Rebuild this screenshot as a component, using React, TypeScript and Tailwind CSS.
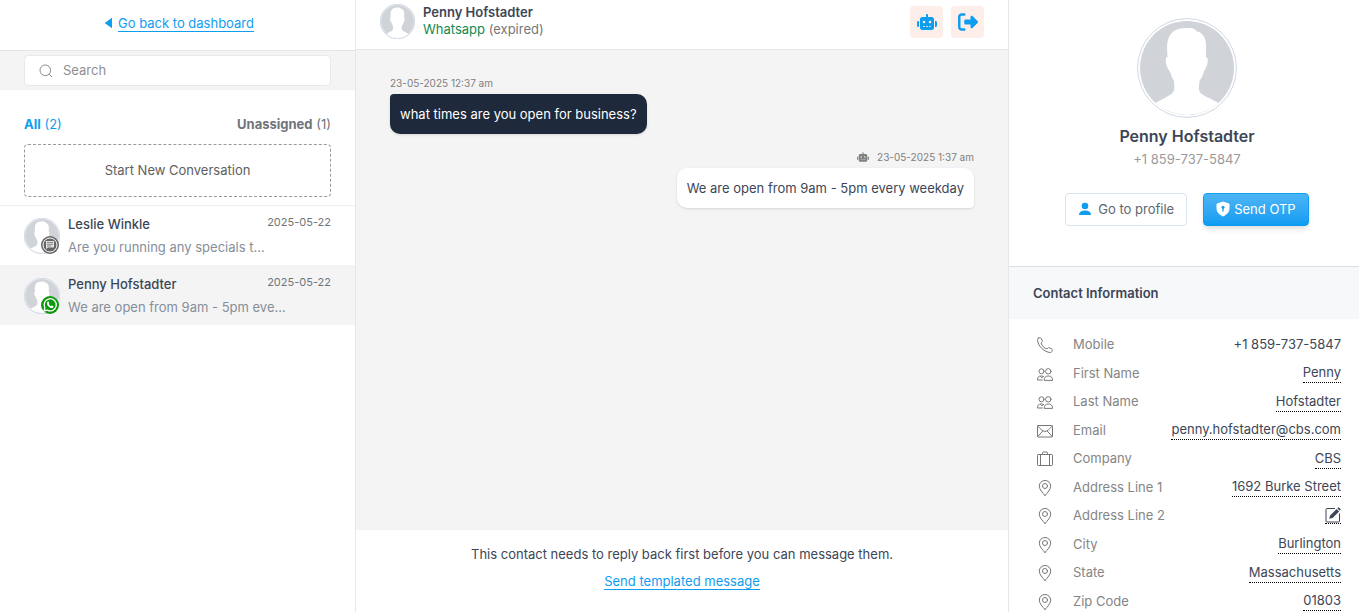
import type { ReactNode } from "react";
import { FaRobot, FaRightFromBracket } from "react-icons/fa6";

type IconProps = { className?: string };

function Avatar({ className = "" }: IconProps) {
  return (
    <svg viewBox="0 0 100 100" className={className} aria-hidden="true">
      <circle cx="50" cy="50" r="49.4" fill="#fff" stroke="#cfd8e4" strokeWidth="1" vectorEffect="non-scaling-stroke" />
      <circle cx="50" cy="50" r="47" fill="#d0d4d9" />
      <path
        fill="#fff"
        d="M50 10C56 9.500 58 11 60 13.500C62 13.500 63.500 14.500 65 16C68 19 69.500 24 69 30L68.800 39C71.500 39 71 44 70 47C69 51 67 52 66.500 55C65.500 59 63.500 61 62.500 63C62 69 61 73 64 75.500C67 78 76 81.500 81.500 85A47.500 47.500 0 0 1 18.500 85C24 82 32 78 35 75.500C38 73 37.500 69 37 63C35.500 61 34.500 58 33.500 55C32.500 52 30.500 51 29.500 47C28.500 44 28 39 30.500 39C30 31 29.500 25 32 19C35 13 40 10 50 10Z"
      />
    </svg>
  );
}

function LineIcon({ children }: { children: ReactNode }) {
  return (
    <svg
      viewBox="0 0 16 16"
      className="mt-0.5 h-4 w-4 shrink-0 text-[#777]"
      fill="none"
      stroke="currentColor"
      strokeWidth="1"
      strokeLinecap="round"
      strokeLinejoin="round"
      aria-hidden="true"
    >
      {children}
    </svg>
  );
}

const phone = (
  <LineIcon>
    <path d="M1.300 1.200 2.600.6c.6-.2 1 .1 1.300.6L5.300 3.800c.3.6.1 1-.3 1.400l-.9.8c.5 2.600 3.300 5.400 5.900 5.900l.8-.9c.4-.4.9-.6 1.400-.3l2.600 1.400c.5.300.8.7.6 1.300l-.6 1.300c-.3.6-.8.800-1.400.8C7.200 15.300.7 8.800.5 2.600c0-.6.2-1.100.8-1.400z" />
  </LineIcon>
);

const people = (
  <LineIcon>
    <circle cx="4.500" cy="5.300" r="2.500" />
    <circle cx="11.300" cy="5.300" r="2.700" />
    <path d="M7.200 14c0-2.700 1.300-4 4.200-4s4.100 1.300 4.100 4zM5.300 14H.5c0-2.700 1.100-4 4-4 .9 0 1.600.2 2.100.5M3.600 10.500l1.200 1.300 1-.8" />
  </LineIcon>
);

const mail = (
  <LineIcon>
    <rect x="0.500" y="2.500" width="15" height="11.500" rx="0.800" />
    <path d="M.8 3c2.200 2.500 4.700 5.400 7.200 5.400S13 5.500 15.200 3M.8 13.500l4.800-5.300M15.200 13.500l-4.800-5.300" />
  </LineIcon>
);

const bag = (
  <LineIcon>
    <rect x="0.500" y="3.500" width="15" height="11" rx="0.800" />
    <path d="M3.500 3.500v11M12.500 3.500v11M5.500 3.300V2.200c0-.8.4-1.200 1.100-1.200h2.800c.7 0 1.100.4 1.100 1.200v1.100" />
  </LineIcon>
);

const pin = (
  <LineIcon>
    <path d="M8 15.500C5.500 12.600 2.300 9.500 2.300 6.100a5.700 5.600 0 0 1 11.400 0c0 3.400-3.200 6.500-5.700 9.400z" />
    <circle cx="8" cy="6" r="2.500" />
  </LineIcon>
);

const editIcon = (
  <svg viewBox="0 0 16 16" className="h-4 w-4" fill="none" aria-hidden="true">
    <path d="M10 1.500H2a1 1 0 0 0-1 1V14a1 1 0 0 0 1 1h11.500a1 1 0 0 0 1-1V6.500" stroke="currentColor" />
    <path d="M4.200 11.800l.9-3.400 6.500-6.500 2.500 2.500-6.500 6.500zM12.300 1.300l.7-.7c.3-.3.7-.3 1 0l1.400 1.400c.3.300.3.700 0 1l-.7.7z" fill="currentColor" />
  </svg>
);

const conversations = [
  { name: "Leslie Winkle", date: "2025-05-22", preview: "Are you running any specials t...", channel: "sms", active: false },
  { name: "Penny Hofstadter", date: "2025-05-22", preview: "We are open from 9am - 5pm eve...", channel: "whatsapp", active: true },
];

const contactFields = [
  { label: "Mobile", value: "+1 859-737-5847", icon: phone, editable: false },
  { label: "First Name", value: "Penny", icon: people, editable: true },
  { label: "Last Name", value: "Hofstadter", icon: people, editable: true },
  { label: "Email", value: "penny.hofstadter@cbs.com", icon: mail, editable: true },
  { label: "Company", value: "CBS", icon: bag, editable: true },
  { label: "Address Line 1", value: "1692 Burke Street", icon: pin, editable: true },
  { label: "Address Line 2", value: "", icon: pin, editable: true },
  { label: "City", value: "Burlington", icon: pin, editable: true },
  { label: "State", value: "Massachusetts", icon: pin, editable: true },
  { label: "Zip Code", value: "01803", icon: pin, editable: true },
];

function ChannelBadge({ channel }: { channel: string }) {
  if (channel === "whatsapp") {
    return (
      <svg viewBox="0 0 18 18" className="absolute right-px bottom-0 h-[18px] w-[18px]" aria-hidden="true">
        <circle cx="9" cy="9" r="9" fill="#0b9a0b" />
        <path d="M3 15l.9-3.200a6.100 6.100 0 1 1 2.300 2.300z" fill="none" stroke="#fff" strokeWidth="1.300" />
        <path
          d="M6.900 5.600c.4-.2.7-.1.900.3l.5 1.200c.1.300-.3.700-.6 1 .5 1 1.200 1.600 2.200 2.100.4-.5.700-.9 1-.7l1.300.6c.4.200.3.700.1 1.100-.5.900-1.500 1-2.500.7C7.800 11.200 6.400 9.700 6 8c-.2-1 .2-2 .9-2.400z"
          fill="#fff"
        />
      </svg>
    );
  }
  return (
    <svg viewBox="0 0 18 18" className="absolute right-px bottom-0 h-[18px] w-[18px]" aria-hidden="true">
      <circle cx="9" cy="9" r="9" fill="#666" />
      <circle cx="9" cy="9" r="7" fill="none" stroke="#fff" />
      <path d="M5 5h8v6.500H7L5 13z" fill="#fff" opacity=".8" />
      <path d="M6 6.500h6M6 8.300h6M6 10h4" stroke="#666" strokeWidth=".7" />
    </svg>
  );
}

function Sidebar() {
  return (
    <aside className="flex w-[356px] shrink-0 flex-col border-r border-[#e5e7eb]">
      <div className="flex h-[51px] items-center justify-center gap-1.5 border-b border-[#e5e5e5] pb-1 pl-1">
        <svg viewBox="0 0 7 12" className="h-3 w-[7px] text-[#0f9df0]" aria-hidden="true">
          <path d="M7 .8v10.400L.3 6.500q-.5-.5 0-1z" fill="currentColor" />
        </svg>
        <a href="#dashboard" className="border-b border-[#0f9df0] leading-4 text-[#0f9df0]">
          Go back to dashboard
        </a>
      </div>

      <div className="bg-[#f4f4f4] px-6 pt-1 pb-1">
        <label className="flex h-[31px] items-center gap-2.5 rounded border border-[#e9e9e9] bg-white px-3.5">
          <svg viewBox="0 0 14 14" className="h-3.5 w-3.5 shrink-0 text-[#8a8a8a]" fill="none" stroke="currentColor" aria-hidden="true">
            <circle cx="6.300" cy="6.300" r="5.300" />
            <path d="M10.200 10.200 13 13" />
          </svg>
          <input
            type="text"
            placeholder="Search"
            aria-label="Search"
            className="h-full w-full bg-transparent pb-0.5 outline-none placeholder:text-[#8f8f8f]"
          />
        </label>
      </div>

      <div className="flex items-center justify-between px-6 pt-6">
        <button type="button" className="text-[#0f9df0]">
          <b className="font-bold">All</b> (2)
        </button>
        <button type="button" className="text-[#6f7479]">
          <b className="font-bold">Unassigned</b> (1)
        </button>
      </div>
      <div className="px-6 pt-2.5 pb-2">
        <button type="button" className="h-[53px] w-full rounded border border-dashed border-[#999] pb-0.5 text-[#606060]">
          Start New Conversation
        </button>
      </div>

      <ul>
        {conversations.map((c) => (
          <li key={c.name} className={c.active ? "border-t border-[#f4f4f4] bg-[#f4f4f4]" : "border-t border-[#f0f0f0] bg-white"}>
            <a href="#conversation" className="flex h-[59px] items-center gap-2 px-6">
              <span className="relative shrink-0">
                <Avatar className="h-9 w-9" />
                <ChannelBadge channel={c.channel} />
              </span>
              <span className="min-w-0 flex-1">
                <span className="flex items-start justify-between">
                  <span className="leading-5 font-medium text-[#3c4656]">{c.name}</span>
                  <time className="text-[11px] leading-4 text-[#6f7479]">{c.date}</time>
                </span>
                <span className="mt-[3px] block truncate text-[#868e99]">{c.preview}</span>
              </span>
            </a>
          </li>
        ))}
      </ul>
    </aside>
  );
}

function Chat() {
  return (
    <main className="flex min-w-0 flex-1 flex-col">
      <header className="flex h-[50px] items-center justify-between border-b border-[#e5e5e5] px-6 pb-1.5">
        <div className="flex items-center gap-2">
          <Avatar className="h-[35px] w-[35px]" />
          <div className="pb-0.5 leading-[17px]">
            <h1 className="font-semibold text-[#3c4656]">Penny Hofstadter</h1>
            <p className="text-[#777]">
              <span className="text-[#118a4e]">Whatsapp</span> (expired)
            </p>
          </div>
        </div>
        <div className="flex gap-2">
          <button type="button" aria-label="Toggle bot" className="grid h-8 w-[33px] place-items-center rounded bg-[#fdeeea] text-[#0f9df0]">
            <FaRobot className="h-5 w-5" />
          </button>
          <button type="button" aria-label="Leave conversation" className="grid h-8 w-[33px] place-items-center rounded bg-[#fdeeea] text-[#0f9df0]">
            <FaRightFromBracket className="h-5 w-5" />
          </button>
        </div>
      </header>

      <section className="flex flex-1 flex-col gap-[15px] bg-[#f4f4f4] px-[34px] pt-[25px]">
        <div className="flex flex-col items-start gap-[3px]">
          <time className="text-[10px] leading-4 text-[#808080]">23-05-2025 12:37 am</time>
          <p className="rounded-[10px] rounded-tl-sm bg-[#1e293b] px-2.5 py-2.5 text-white shadow-sm">
            what times are you open for business?
          </p>
        </div>
        <div className="flex flex-col items-end gap-[3px]">
          <span className="flex items-center gap-2 text-[10px] leading-4 text-[#808080]">
            <FaRobot className="h-3 w-3" />
            <time>23-05-2025 1:37 am</time>
          </span>
          <p className="rounded-[10px] rounded-br-sm bg-white px-2.5 py-2.5 text-[#3c4656] shadow-sm">
            We are open from 9am - 5pm every weekday
          </p>
        </div>
      </section>

      <footer className="flex h-[82px] flex-col items-center gap-[9px] pt-[14px] text-[#3c4656]">
        <p>This contact needs to reply back first before you can message them.</p>
        <a href="#template" className="border-b border-[#0f9df0] leading-4 text-[#0f9df0]">
          Send templated message
        </a>
      </footer>
    </main>
  );
}

function ContactPanel() {
  return (
    <aside className="flex w-[351px] shrink-0 flex-col overflow-hidden border-l border-[#e5e7eb]">
      <div className="flex flex-col items-center border-b border-[#dbdfe3] pt-[18px] pb-10 pl-1.5">
        <Avatar className="h-[100px] w-[100px]" />
        <h2 className="mt-2 text-base leading-5 font-semibold text-[#3c4656]">Penny Hofstadter</h2>
        <p className="mt-[3px] text-[#9a9a9a]">+1 859-737-5847</p>
        <div className="mt-6 flex gap-4">
          <a href="#profile" className="flex h-[33px] items-center gap-1.5 rounded-sm border border-[#dbe4ee] px-3 pb-px text-[#606670]">
            <svg viewBox="0 0 14 14" className="h-3.5 w-3.5 text-[#0f9df0]" fill="currentColor" aria-hidden="true">
              <circle cx="7" cy="4" r="3.300" />
              <path d="M1 13c0-3 2-4.500 6-4.500s6 1.500 6 4.500z" />
            </svg>
            Go to profile
          </a>
          <button
            type="button"
            className="flex h-[33px] items-center gap-1 rounded-sm border border-[#0f9df0] bg-linear-to-b from-[#4bb5f5] to-[#0a9cf3] px-3 pb-px text-white shadow-md"
          >
            <svg viewBox="0 0 14 16" className="h-4 w-3.5" aria-hidden="true">
              <path d="M7 1 13 3v4.500c0 3.500-2.500 6-6 7.500-3.500-1.500-6-4-6-7.500V3z" fill="#fff" stroke="#fff" strokeLinejoin="round" />
              <path d="M7 6v4.500" stroke="#0f9df0" strokeWidth="1.300" />
              <circle cx="7" cy="6.300" r="1.500" fill="#0f9df0" />
            </svg>
            Send OTP
          </button>
        </div>
      </div>

      <h3 className="bg-[#f7f8fa] px-6 py-4 leading-5 font-semibold text-[#3c4656]">Contact Information</h3>

      <dl className="grid min-h-[296px] auto-rows-fr pt-[11px] pr-[18px] pl-7">
        {contactFields.map((field) => (
          <div key={field.label} className="flex items-center text-[#858585]">
            {field.icon}
            <dt className="ml-5">{field.label}</dt>
            <dd className="ml-auto text-[#3c4656]">
              {field.editable ? (
                <a href="#edit" aria-label={`Edit ${field.label}`} className="block border-b border-dotted border-black">
                  {field.value || editIcon}
                </a>
              ) : (
                field.value
              )}
            </dd>
          </div>
        ))}
      </dl>
    </aside>
  );
}

export default function App() {
  return (
    <div className="flex h-screen overflow-hidden bg-white font-[Inter,sans-serif] text-[13px] leading-5">
      <Sidebar />
      <Chat />
      <ContactPanel />
    </div>
  );
}
